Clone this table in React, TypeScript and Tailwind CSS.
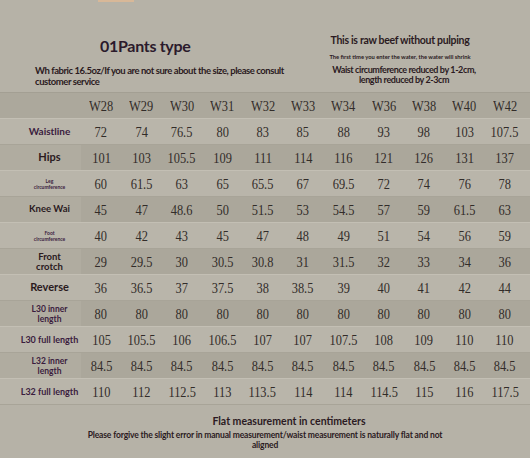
const cols = ["W28", "W29", "W30", "W31", "W32", "W33", "W34", "W36", "W38", "W40", "W42"];

type Row = { label: React.ReactNode; values: string[] };

const purple = "text-[#3b1c3e]";
const dark = "text-[#2a1a1e]";

const rows: Row[] = [
  {
    label: <span className={`text-[10px] ${purple}`}>Waistline</span>,
    values: ["72", "74", "76.5", "80", "83", "85", "88", "93", "98", "103", "107.5"],
  },
  {
    label: <span className={`text-[11px] ${dark}`}>Hips</span>,
    values: ["101", "103", "105.5", "109", "111", "114", "116", "121", "126", "131", "137"],
  },
  {
    label: (
      <span className={`text-[5px] leading-[6px] ${purple}`}>
        Leg
        <br />
        circumference
      </span>
    ),
    values: ["60", "61.5", "63", "65", "65.5", "67", "69.5", "72", "74", "76", "78"],
  },
  {
    label: <span className={`text-[9.5px] ${dark}`}>Knee Wai</span>,
    values: ["45", "47", "48.6", "50", "51.5", "53", "54.5", "57", "59", "61.5", "63"],
  },
  {
    label: (
      <span className={`text-[5px] leading-[6px] ${purple}`}>
        Foot
        <br />
        circumference
      </span>
    ),
    values: ["40", "42", "43", "45", "47", "48", "49", "51", "54", "56", "59"],
  },
  {
    label: (
      <span className={`text-[9.5px] leading-[10px] ${dark}`}>
        Front
        <br />
        crotch
      </span>
    ),
    values: ["29", "29.5", "30", "30.5", "30.8", "31", "31.5", "32", "33", "34", "36"],
  },
  {
    label: <span className={`text-[11px] ${dark}`}>Reverse</span>,
    values: ["36", "36.5", "37", "37.5", "38", "38.5", "39", "40", "41", "42", "44"],
  },
  {
    label: (
      <span className={`text-[8.5px] leading-[10px] ${purple}`}>
        L30 inner
        <br />
        length
      </span>
    ),
    values: ["80", "80", "80", "80", "80", "80", "80", "80", "80", "80", "80"],
  },
  {
    label: <span className={`text-[9px] ${purple}`}>L30 full length</span>,
    values: ["105", "105.5", "106", "106.5", "107", "107", "107.5", "108", "109", "110", "110"],
  },
  {
    label: (
      <span className={`text-[8.5px] leading-[10px] ${purple}`}>
        L32 inner
        <br />
        length
      </span>
    ),
    values: ["84.5", "84.5", "84.5", "84.5", "84.5", "84.5", "84.5", "84.5", "84.5", "84.5", "84.5"],
  },
  {
    label: <span className={`text-[9px] ${purple}`}>L32 full length</span>,
    values: ["110", "112", "112.5", "113", "113.5", "114", "114", "114.5", "115", "116", "117.5"],
  },
];

const sans = "font-['Lato',sans-serif]";
const serif = "font-['Liberation_Serif',serif]";

function Num({ children }: { children: React.ReactNode }) {
  return (
    <span className={`${serif} inline-block scale-x-[0.8] text-[15.5px] font-normal text-[#322c29]`}>
      {children}
    </span>
  );
}

export default function App() {
  return (
    <div className={`w-[530px] h-[458px] overflow-hidden bg-[#b6b2a7] ${sans} font-bold`}>
      {/* header */}
      <div className="relative h-[92px]">
        <div className="absolute left-[98px] top-0 h-[2px] w-[36px] bg-[#d8b898]" />
        <div className="flex">
          <div className="w-[290px] pl-[35px] pt-[35px]">
            <div className="pl-[65px] text-[16px] leading-[22px] tracking-[-0.3px] text-[#2b1a2c]">
              01Pants type
            </div>
            <div className="mt-[8px] text-[9.5px] leading-[11px] tracking-[-0.45px] text-[#2b1a1e]">
              Wh fabric 16.5oz/If you are not sure about the size, please consult customer service
            </div>
          </div>
          <div className="w-[220px] pt-[33px] text-center">
            <div className="text-[10.5px] leading-[14px] tracking-[-0.3px] text-[#2b1a22]">
              This is raw beef without pulping
            </div>
            <div className="mt-[6px] text-[5.8px] leading-[7px] text-[#2b1a22]">
              The first time you enter the water, the water will shrink
            </div>
            <div className="mt-[5px] pl-[8px] text-[9px] leading-[10px] tracking-[-0.4px] text-[#2b1a22]">
              Waist circumference reduced by 1-2cm,
              <br />
              length reduced by 2-3cm
            </div>
          </div>
        </div>
      </div>

      {/* table */}
      <div className="border-t border-[#a39f93]">
        <div className="grid h-[26px] grid-cols-[81px_repeat(11,minmax(0,1fr))] items-center border-b border-[#c3bfb4] bg-[#aca89c] pr-[5px]">
          <div />
          {cols.map((c) => (
            <div key={c} className="text-center">
              <Num>{c}</Num>
            </div>
          ))}
        </div>
        {rows.map((r, i) => (
          <div
            key={i}
            className={`grid h-[26px] grid-cols-[81px_repeat(11,minmax(0,1fr))] items-stretch border-b pr-[5px] ${
              i % 2 === 0 ? "bg-[#b9b5aa] border-[#a8a498]" : "bg-[#aba79b] border-[#c3bfb4]"
            }`}
          >
            <div
              className={`flex items-center justify-center pl-[18px] text-center ${
                i % 2 === 0 ? "" : "bg-[#b0aca0]"
              }`}
            >
              {r.label}
            </div>
            {r.values.map((v, j) => (
              <div key={j} className="flex items-center justify-center">
                <Num>{v}</Num>
              </div>
            ))}
          </div>
        ))}
      </div>

      {/* footer */}
      <div className="pt-[9px] text-center">
        <div className="pl-[48px] text-[10.5px] leading-[14px] text-[#2b1a22]">Flat measurement in centimeters</div>
        <div className="mx-auto mt-[2px] w-[366px] pr-[0px] text-[8.5px] leading-[10px] tracking-[-0.15px] text-[#2b1a22]">
          Please forgive the slight error in manual measurement/waist measurement is naturally flat and not aligned
        </div>
      </div>
    </div>
  );
}
